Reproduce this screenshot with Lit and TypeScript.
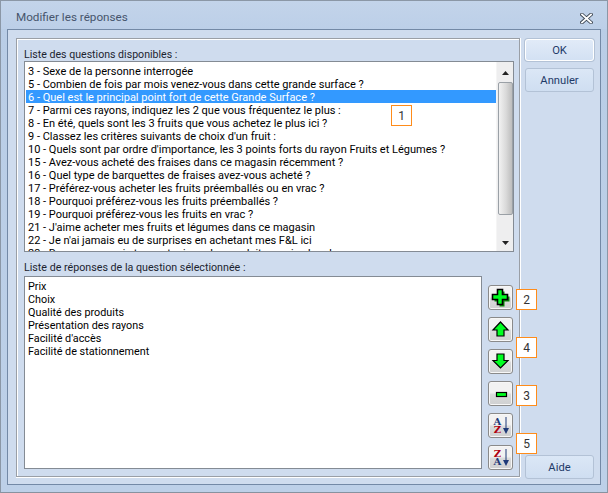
import { LitElement, html, css, svg } from "lit";
import { customElement } from "lit/decorators.js";

const questions = [
  "3 - Sexe de la personne interrogée",
  "5 - Combien de fois par mois venez-vous dans cette grande surface ?",
  "6 - Quel est le principal point fort de cette Grande Surface ?",
  "7 - Parmi ces rayons, indiquez les 2 que vous fréquentez le plus :",
  "8 - En été, quels sont les 3 fruits que vous achetez le plus ici ?",
  "9 - Classez les critères suivants de choix d'un fruit :",
  "10 - Quels sont par ordre d'importance, les 3 points forts du rayon Fruits et Légumes ?",
  "15 - Avez-vous acheté des fraises dans ce magasin récemment ?",
  "16 - Quel type de barquettes de fraises avez-vous acheté ?",
  "17 - Préférez-vous acheter les fruits préemballés ou en vrac ?",
  "18 - Pourquoi préférez-vous les fruits préemballés ?",
  "19 - Pourquoi préférez-vous les fruits en vrac ?",
  "21 - J'aime acheter mes fruits et légumes dans ce magasin",
  "22 - Je n'ai jamais eu de surprises en achetant mes F&L ici",
  "23 - Dans ce rayon, je trouve toujours les produits que je cherche",
];
const answers = ["Prix", "Choix", "Qualité des produits", "Présentation des rayons", "Facilité d'accès", "Facilité de stationnement"];

const icon = (body: unknown) => html`<svg width="21" height="21" viewBox="0 0 21 21">${body}</svg>`;
const plus = icon(svg`<path d="M9.5 4.5h5v5h5v5h-5v5h-5v-5h-5v-5h5z" fill="#078a07"/><path d="M7.5 2.5h5v5h5v5h-5v5h-5v-5h-5v-5h5z" fill="#00ff20" stroke="#000" stroke-width="1.6"/>`);
const up = icon(svg`<path d="M10.5 3 L18 11 H14 V17 H7 V11 H3 Z" fill="#00ff20" stroke="#000" stroke-width="1.2"/>`);
const down = icon(svg`<path d="M7 3 H14 V9.5 H18 L10.5 17 L3 9.5 H7 Z" fill="#00ff20" stroke="#000" stroke-width="1.2"/>`);
const minus = icon(svg`<rect x="6.5" y="9.5" width="10" height="4" fill="#00ff20" stroke="#000" stroke-width="1.2"/>`);
const arrow = html`<svg width="6" height="17" viewBox="0 0 6 17"><path d="M2.5 0h1v11H6l-3 6-3-6h2.5z" fill="#1f3a78"/></svg>`;

@customElement("app-root")
export class AppRoot extends LitElement {
  static styles = css`
    :host {
      display: block;
      width: 608px;
      height: 493px;
      box-sizing: border-box;
      overflow: hidden;
      position: relative;
      font-family: Roboto, "Liberation Sans", sans-serif;
      font-size: 11px;
      color: #000;
      background: linear-gradient(#b9cde6, #bdd0e8);
      border: 1px solid #8b97a6;
      border-bottom-color: #87929f;
    }
    .title {
      height: 28px;
      box-sizing: border-box;
      padding: 9px 14px 0 15px;
      display: flex;
      justify-content: space-between;
      align-items: flex-start;
      color: #46556c;
      font-size: 11.7px;
      line-height: 15px;
      background: linear-gradient(#c3d4ea, #bccfe8);
    }
    .close { margin-top: 3px; }
    .frame {
      margin: 0 6px;
      height: 456px;
      box-sizing: border-box;
      background: #cfdcee;
      border: 1px solid #7389a6;
      padding: 8px 5px 7px 8px;
      display: flex;
      gap: 5px;
    }
    .panel {
      width: 504px;
      box-sizing: border-box;
      border: 1px solid #9a9fa6;
      box-shadow: inset 1px 1px 0 #fff, 0 1px 0 #fff, 1px 0 0 #fff;
      padding: 8px 5px 6px 7px;
      display: flex;
      flex-direction: column;
    }
    .label { height: 14px; line-height: 15px; color: #1c2430; font-size: 10.6px; white-space: nowrap; }
    .label.second { margin-top: 8px; margin-bottom: 2px; font-size: 10.7px; }
    .list {
      background: #fff;
      border: 1px solid #848b94;
      box-sizing: border-box;
      overflow: hidden;
      line-height: 15px;
      white-space: nowrap;
    }
    .qlist { height: 194px; width: 490px; display: flex; }
    .rows { flex: 1; padding: 2px 0 0 1px; overflow: hidden; min-width: 0; }
    .row { height: 13px; padding-left: 2px; }
    .row.sel { background: #3399ff; color: #fff; }
    .scroll {
      width: 17px;
      background: #eeeeef;
      border-left: 1px solid #f5f5f5;
      box-sizing: border-box;
      display: flex;
      flex-direction: column;
      align-items: center;
      padding-top: 3px;
    }
    .arrowbtn { height: 16px; width: 100%; display: flex; align-items: center; justify-content: center; }
    .thumb {
      width: 15px;
      height: 133px;
      box-sizing: border-box;
      margin-top: 1px;
      border: 1px solid #9aa0a6;
      border-radius: 2px;
      background: linear-gradient(90deg, #f2f2f2, #d9d9d9 55%, #bdbdbd);
    }
    .spacer { flex: 1; }
    .bottom { display: flex; gap: 6px; }
    .alist { width: 458px; height: 193px; padding: 2px 0 0 3px; font-size: 10.8px; }
    .aline { height: 13px; }
    .tools { display: flex; flex-direction: column; gap: 7px; padding-top: 9px; }
    .tool {
      width: 25px;
      height: 25px;
      box-sizing: border-box;
      border: 1px solid #8a8a8a;
      border-radius: 3px;
      background: linear-gradient(#f2f2f2 0 45%, #d9dadb 55%, #cfd0d1);
      box-shadow: inset 0 0 0 1px #f7f7f7;
      padding: 1px;
      display: flex;
      align-items: center;
      justify-content: center;
    }
    .tool.sort { justify-content: flex-start; }
    .letters {
      display: flex;
      flex-direction: column;
      font-family: "DejaVu Serif", serif;
      font-weight: 700;
      font-size: 10px;
      line-height: 8px;
      width: 9px;
      text-align: center;
      margin: 0 1px 0 3px;
    }
    .navy { color: #1f3a78; }
    .red { color: #b00010; }
    .side { flex: 1; display: flex; flex-direction: column; padding-top: 1px; margin-bottom: -2px; }
    .btn {
      width: 69px;
      box-sizing: border-box;
      height: 24px;
      display: flex;
      align-items: center;
      justify-content: center;
      color: #1e3a68;
      border: 1px solid #b3c2d6;
      border-radius: 3px;
      background: linear-gradient(#dbe7f6, #cfdef1);
      font-size: 11.2px;
    }
    .btn.ok {
      height: 22px;
      border-color: #fff;
      box-shadow: 0 0 0 1px #b3c2d6;
      background: linear-gradient(#e1ebf8, #d3e1f3);
    }
    .btn.cancel { margin-top: 7px; }
    .btn.help { margin-top: auto; }
    .badge {
      position: absolute;
      width: 21px;
      height: 21px;
      box-sizing: border-box;
      background: #fff;
      border: 1px solid #ff8c1a;
      display: flex;
      align-items: center;
      justify-content: center;
      color: #333;
      font-size: 12px;
    }
  `;

  render() {
    const sort = (a: string, ca: string, b: string, cb: string) => html`
      <div class="tool sort"><span class="letters"><span class=${ca}>${a}</span><span class=${cb}>${b}</span></span>${arrow}</div>`;
    return html`
      <div class="title">
        <span>Modifier les réponses</span>
        <svg class="close" width="13" height="11" viewBox="0 0 13 11"><path d="M2 1.5 L11 9.5 M11 1.5 L2 9.5" stroke="#3c4653" stroke-width="3.6" stroke-linecap="square"/><path d="M2 1.5 L11 9.5 M11 1.5 L2 9.5" stroke="#fff" stroke-width="1.8" stroke-linecap="square"/></svg>
      </div>
      <div class="frame">
        <div class="panel">
          <div class="label">Liste des questions disponibles :</div>
          <div class="list qlist">
            <div class="rows">
              ${questions.map((q, i) => html`<div class="row ${i === 2 ? "sel" : ""}">${q}</div>`)}
            </div>
            <div class="scroll">
              <div class="arrowbtn"><svg width="7" height="4" viewBox="0 0 7 4"><path d="M3.5 0 7 4H0z" fill="#222"/></svg></div>
              <div class="thumb"></div>
              <div class="spacer"></div>
              <div class="arrowbtn"><svg width="7" height="4" viewBox="0 0 7 4"><path d="M0 0h7L3.5 4z" fill="#222"/></svg></div>
            </div>
          </div>
          <div class="label second">Liste de réponses de la question sélectionnée :</div>
          <div class="bottom">
            <div class="list alist">${answers.map((a) => html`<div class="aline">${a}</div>`)}</div>
            <div class="tools">
              <div class="tool">${plus}</div>
              <div class="tool">${up}</div>
              <div class="tool">${down}</div>
              <div class="tool">${minus}</div>
              ${sort("A", "navy", "Z", "red")}
              ${sort("Z", "red", "A", "navy")}
            </div>
          </div>
        </div>
        <div class="side">
          <div class="btn ok">OK</div>
          <div class="btn cancel">Annuler</div>
          <div class="btn help">Aide</div>
        </div>
      </div>
      <div class="badge" style="left:390px;top:104px">1</div>
      <div class="badge" style="left:515px;top:288px">2</div>
      <div class="badge" style="left:515px;top:336px">4</div>
      <div class="badge" style="left:515px;top:384px">3</div>
      <div class="badge" style="left:515px;top:432px">5</div>
    `;
  }
}
